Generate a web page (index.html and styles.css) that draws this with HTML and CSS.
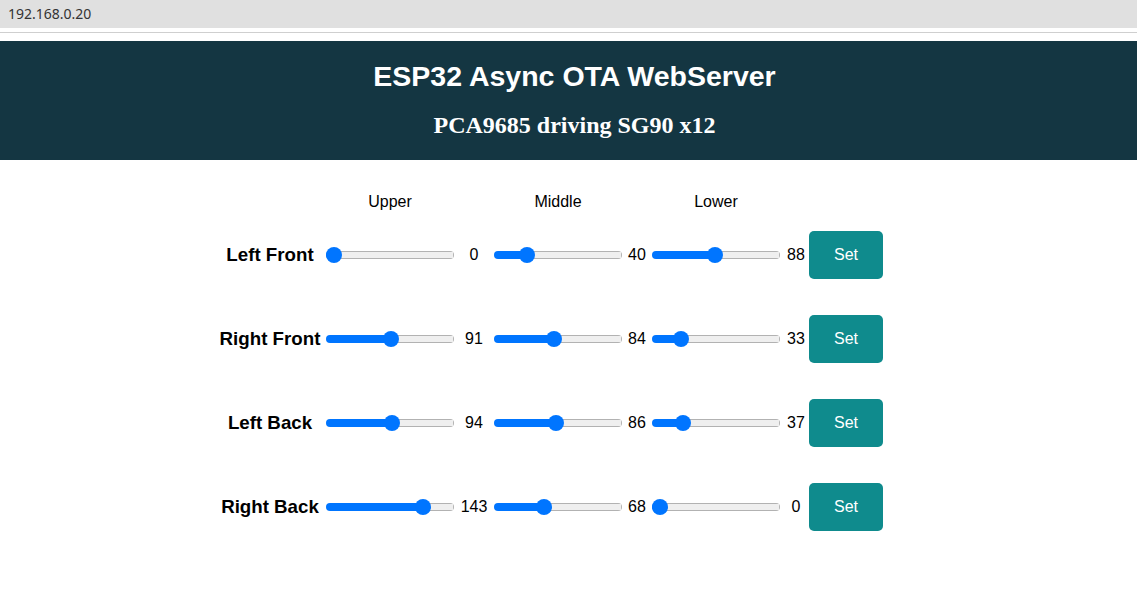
FILE: index.html
```html
<!DOCTYPE html>
<html lang="en">
<head>
<meta charset="utf-8">
<title>ESP32 Async OTA WebServer</title>
<link rel="stylesheet" href="styles.css">
</head>
<body>
<div class="addressbar">192.168.0.20</div>
<div class="divider"></div>
<header class="topnav">
  <h1 class="title">ESP32 Async OTA WebServer</h1>
  <h2 class="subtitle">PCA9685 driving SG90 x12</h2>
</header>
<main class="board">
  <div class="colhead"></div>
  <div class="colhead">Upper</div>
  <div class="colhead"></div>
  <div class="colhead">Middle</div>
  <div class="colhead"></div>
  <div class="colhead">Lower</div>
  <div class="colhead"></div>
  <div class="colhead"></div>

  <div class="leg">Left Front</div>
  <div class="cell"><input class="servo" type="range" min="0" max="180" value="0" style="--v:0"></div>
  <div class="val">0</div>
  <div class="cell"><input class="servo" type="range" min="0" max="180" value="40" style="--v:40"></div>
  <div class="val">40</div>
  <div class="cell"><input class="servo" type="range" min="0" max="180" value="88" style="--v:88"></div>
  <div class="val val-last">88</div>
  <div class="cell"><button class="btn">Set</button></div>

  <div class="leg">Right Front</div>
  <div class="cell"><input class="servo" type="range" min="0" max="180" value="91" style="--v:91"></div>
  <div class="val">91</div>
  <div class="cell"><input class="servo" type="range" min="0" max="180" value="84" style="--v:84"></div>
  <div class="val">84</div>
  <div class="cell"><input class="servo" type="range" min="0" max="180" value="33" style="--v:33"></div>
  <div class="val val-last">33</div>
  <div class="cell"><button class="btn">Set</button></div>

  <div class="leg">Left Back</div>
  <div class="cell"><input class="servo" type="range" min="0" max="180" value="94" style="--v:94"></div>
  <div class="val">94</div>
  <div class="cell"><input class="servo" type="range" min="0" max="180" value="86" style="--v:86"></div>
  <div class="val">86</div>
  <div class="cell"><input class="servo" type="range" min="0" max="180" value="37" style="--v:37"></div>
  <div class="val val-last">37</div>
  <div class="cell"><button class="btn">Set</button></div>

  <div class="leg">Right Back</div>
  <div class="cell"><input class="servo" type="range" min="0" max="180" value="143" style="--v:143"></div>
  <div class="val">143</div>
  <div class="cell"><input class="servo" type="range" min="0" max="180" value="68" style="--v:68"></div>
  <div class="val">68</div>
  <div class="cell"><input class="servo" type="range" min="0" max="180" value="0" style="--v:0"></div>
  <div class="val val-last">0</div>
  <div class="cell"><button class="btn">Set</button></div>
</main>
</body>
</html>
```
FILE: styles.css
```css
html, body {
  margin: 0;
  padding: 0;
  background: #ffffff;
}
body {
  font-family: "Liberation Sans", Arial, sans-serif;
  color: #000;
}
.addressbar {
  height: 28px;
  background: #e0e0e0;
  font-family: "Noto Sans", "Open Sans", sans-serif;
  font-size: 14px;
  line-height: 28px;
  color: #333;
  padding-left: 8px;
  box-sizing: border-box;
}
.divider {
  height: 1px;
  background: #cfcfcf;
  margin: 4px 0 8px 0;
}
.topnav {
  background: #143642;
  height: 119px;
  box-sizing: border-box;
  padding: 19px 0 0 12px;
  display: flex;
  flex-direction: column;
  align-items: center;
  color: #fff;
}
.title {
  margin: 0;
  font-family: "Liberation Sans", Arial, sans-serif;
  font-size: 28.5px;
  line-height: 32px;
  font-weight: bold;
}
.subtitle {
  margin: 19px 0 0 0;
  font-family: "Liberation Serif", "Times New Roman", serif;
  font-size: 24px;
  line-height: 28px;
  font-weight: bold;
}
.board {
  display: grid;
  grid-template-columns: 112px 128px 40px 128px 30px 128px 29px 74px;
  grid-template-rows: 23px repeat(4, 84px);
  align-items: center;
  margin: 30px 0 0 214px;
  width: max-content;
  font-size: 16px;
}
.colhead {
  text-align: center;
  font-size: 16px;
  line-height: 18px;
}
.leg {
  text-align: center;
  font-weight: bold;
  font-size: 18.72px;
  line-height: 22px;
}
.cell {
  display: flex;
  align-items: center;
}
.val {
  text-align: center;
  line-height: 18px;
}
.val-last {
  padding-left: 3px;
}
.btn {
  background: #0f8b8d;
  color: #fff;
  border: none;
  border-radius: 5px;
  padding: 15px 25px;
  font-family: "Liberation Sans", Arial, sans-serif;
  font-size: 16px;
  line-height: 18px;
  margin: 0;
  cursor: pointer;
}
.servo {
  -webkit-appearance: none;
  appearance: none;
  width: 128px;
  height: 16px;
  margin: 0;
  padding: 0;
  background: transparent;
  display: block;
}
.servo::-webkit-slider-runnable-track {
  height: 8px;
  border-radius: 4px;
  border: none;
  background:
    linear-gradient(#0075ff, #0075ff) 0 0 / calc(8px + var(--v) * 112px / 180) 100% no-repeat,
    linear-gradient(#efefef, #efefef) 1px 1px / calc(100% - 2px) calc(100% - 2px) no-repeat,
    #b2b2b2;
}
.servo::-webkit-slider-thumb {
  -webkit-appearance: none;
  appearance: none;
  width: 16px;
  height: 16px;
  border-radius: 50%;
  background: #0075ff;
  border: none;
  margin-top: -4px;
}
```
